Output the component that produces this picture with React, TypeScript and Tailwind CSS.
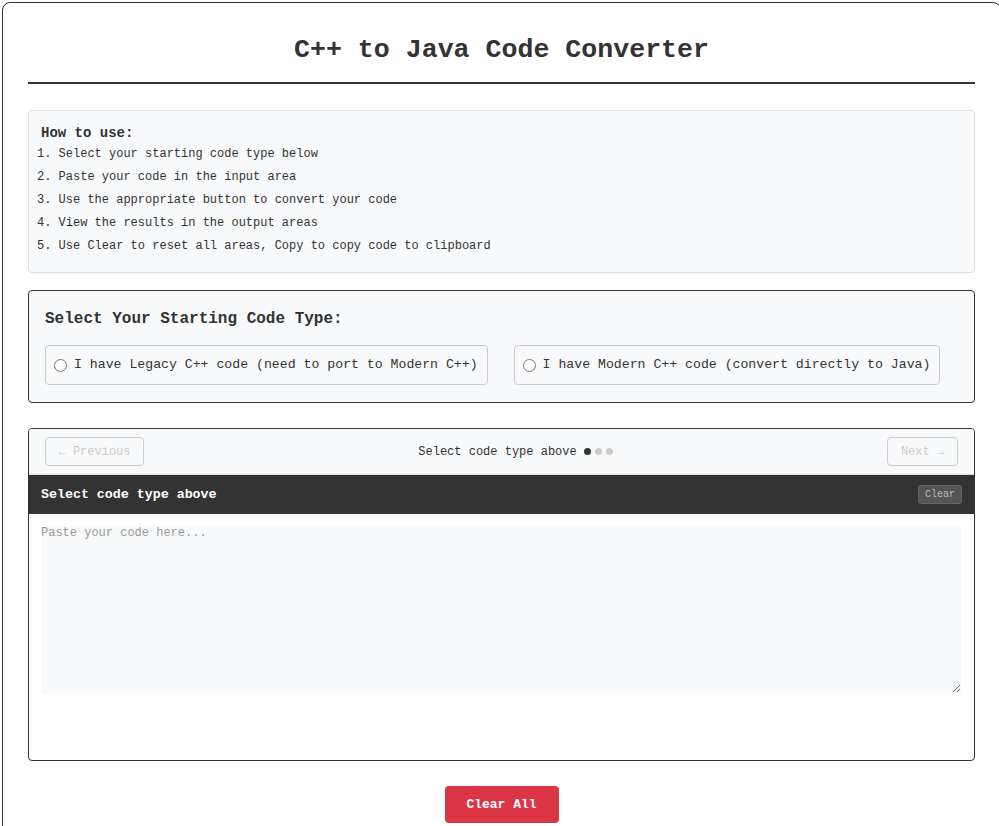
import React, { useState } from "react";

const mono = { fontFamily: '"Liberation Mono", "Courier New", monospace' };

function TypeOption({ label, checked, onChange }: { label: string; checked: boolean; onChange: () => void }) {
  return (
    <label className="flex items-center h-[40px] border border-[#ccc] rounded bg-[#f8f9fa] pl-[8px] pr-[9px] cursor-pointer">
      <input
        type="radio"
        name="codetype"
        checked={checked}
        onChange={onChange}
        className="w-[13px] h-[13px] m-0 mr-[7px] accent-[#333]"
      />
      <span className="text-[13.2px] text-[#333]">{label}</span>
    </label>
  );
}

export default function App() {
  const [type, setType] = useState<string | null>(null);
  const [code, setCode] = useState("");

  const steps = [
    "Select your starting code type below",
    "Paste your code in the input area",
    "Use the appropriate button to convert your code",
    "View the results in the output areas",
    "Use Clear to reset all areas, Copy to copy code to clipboard",
  ];

  return (
    <div className="w-[999px] h-[826px] overflow-hidden bg-white" style={mono}>
      <div className="ml-[2px] mt-[2px] w-[999px] border border-[#333] rounded-[8px] px-[25px] pb-[30px] text-[#333]">
        <div className="pt-[32px] pb-[16px] border-b-2 border-[#333] text-center">
          <h1 className="text-[26.6px] leading-[31px] font-bold">C++ to Java Code Converter</h1>
        </div>

        <div className="mt-[26px] h-[163px] bg-[#f8f9fa] border border-[#ddd] rounded pt-[14px] px-[12px]">
          <h3 className="text-[14px] leading-[17px] font-bold">How to use:</h3>
          <ol className="mt-[1px] -ml-[4px]">
            {steps.map((s, i) => (
              <li key={i} className="text-[12px] leading-[14px] py-[4.4px]">
                {i + 1}. {s}
              </li>
            ))}
          </ol>
        </div>

        <div className="mt-[17px] h-[113px] bg-[#f8f9fa] border border-[#333] rounded px-[16px] pt-[19px]">
          <h3 className="text-[16px] leading-[19px] font-bold">Select Your Starting Code Type:</h3>
          <div className="mt-[16px] flex gap-[26px]">
            <TypeOption
              label="I have Legacy C++ code (need to port to Modern C++)"
              checked={type === "legacy"}
              onChange={() => setType("legacy")}
            />
            <TypeOption
              label="I have Modern C++ code (convert directly to Java)"
              checked={type === "modern"}
              onChange={() => setType("modern")}
            />
          </div>
        </div>

        <div className="mt-[25px] h-[333px] border border-[#333] rounded overflow-hidden">
          <div className="h-[46px] bg-[#f8f9fa] border-b border-[#ddd] flex items-center justify-between px-[16px]">
            <button
              disabled
              className="w-[99px] h-[29px] border border-[#ccc] rounded text-[12px] text-[#ccc] bg-transparent"
              style={mono}
            >
              ← Previous
            </button>
            <div className="flex items-center">
              <span className="text-[12px]">Select code type above</span>
              <div className="flex items-center gap-[4px] ml-[7px]">
                <span className="w-[7px] h-[7px] rounded-full bg-[#333]" />
                <span className="w-[7px] h-[7px] rounded-full bg-[#ccc]" />
                <span className="w-[7px] h-[7px] rounded-full bg-[#ccc]" />
              </div>
            </div>
            <button
              disabled
              className="w-[71px] h-[29px] border border-[#ccc] rounded text-[12px] text-[#ccc] bg-transparent"
              style={mono}
            >
              Next →
            </button>
          </div>
          <div className="h-[39px] bg-[#333] flex items-center justify-between px-[12px]">
            <span className="text-[13.3px] font-bold text-white">Select code type above</span>
            <button
              className="h-[19px] px-[6px] bg-[#555] border border-[#666] rounded-[3px] text-[10px] text-[#bbb]"
              style={mono}
              onClick={() => setCode("")}
            >
              Clear
            </button>
          </div>
          <div className="px-[12px] pt-[12px] pr-[13px]">
            <textarea
              value={code}
              onChange={(e) => setCode(e.target.value)}
              placeholder="Paste your code here..."
              className="block w-full h-[167px] bg-[#f8f9fa] text-[12px] leading-[14px] outline-none placeholder:text-[#999] resize-y"
              style={mono}
            />
          </div>
        </div>

        <div className="mt-[25px] flex justify-center">
          <button
            className="w-[114px] h-[37px] bg-[#dc3545] text-white text-[13px] font-bold rounded"
            style={mono}
            onClick={() => {
              setCode("");
              setType(null);
            }}
          >
            Clear All
          </button>
        </div>
      </div>
    </div>
  );
}
